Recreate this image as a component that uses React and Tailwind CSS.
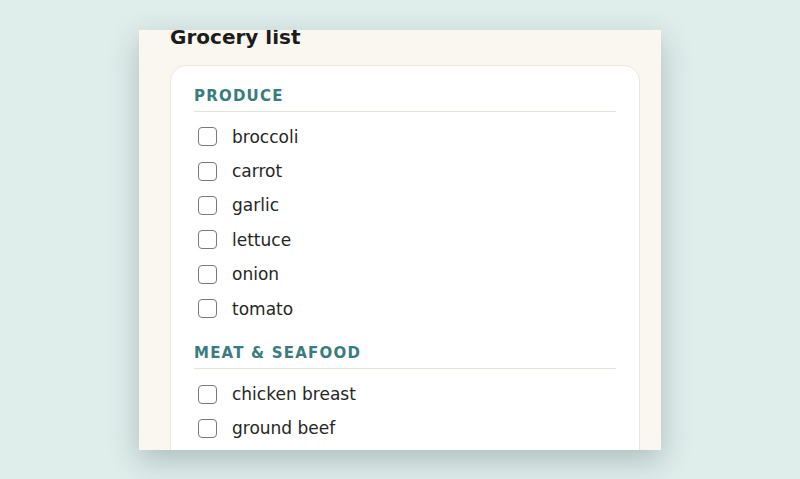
const sections = [
  { title: "Produce", items: ["broccoli", "carrot", "garlic", "lettuce", "onion", "tomato"] },
  { title: "Meat & Seafood", items: ["chicken breast", "ground beef", "salmon", "shrimp"] },
];

// Single grocery row with a box-style checkbox
function Item({ label }) {
  return (
    <label className="flex items-center h-[34.4px] cursor-pointer">
      <span className="ml-[4px] w-[19px] h-[19px] rounded-[4px] border border-[#7a7a7a] bg-white shrink-0" />
      <span className="ml-[15px] text-[17px] leading-[24px] text-[#262626]">{label}</span>
    </label>
  );
}

export default function App() {
  return (
    <div
      className="w-full h-[479px] bg-[#dfedeb] flex items-center justify-center"
      style={{ fontFamily: '"DejaVu Sans", Verdana, sans-serif' }}
    >
      <div className="w-[522px] h-[420px] bg-[#faf7f0] overflow-hidden shadow-[0_10px_28px_rgba(40,70,70,0.28)] pl-[31px] pr-[21px]">
        <h1 className="-mt-[7px] text-[20px] leading-[28px] font-bold text-[#1c1c1c]">Grocery list</h1>
        <div className="mt-[14px] bg-white border border-[#ebe6da] rounded-[16px] px-[23px] pt-[20px] pb-6">
          {sections.map((s, i) => (
            <section key={s.title} className={i > 0 ? "mt-[17px]" : ""}>
              <h2 className="text-[15px] leading-[20px] font-bold uppercase tracking-[0.08em] text-[#3a7c7d] pb-[5px] border-b border-[#e6e2d8]">
                {s.title}
              </h2>
              <div className="mt-[8px]">
                {s.items.map((it) => (
                  <Item key={it} label={it} />
                ))}
              </div>
            </section>
          ))}
        </div>
      </div>
    </div>
  );
}
